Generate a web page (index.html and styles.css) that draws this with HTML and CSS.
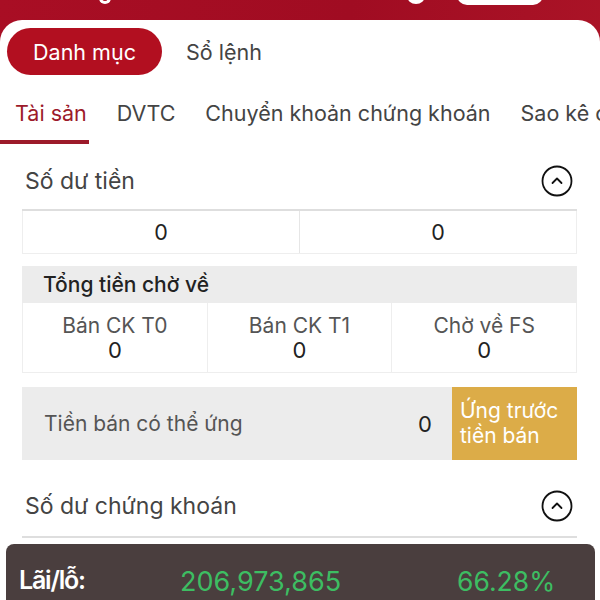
FILE: index.html
```html
<!DOCTYPE html>
<html lang="vi">
<head>
<meta charset="utf-8">
<link rel="stylesheet" href="styles.css">
</head>
<body>
<div class="topbar">
  <span class="top-hook"></span>
  <span class="top-dot"></span>
  <span class="top-btn"></span>
</div>
<main class="card">
  <div class="segments">
    <div class="seg active">Danh mục</div>
    <div class="seg">Sổ lệnh</div>
  </div>
  <nav class="tabs">
    <div class="tab active">Tài sản</div>
    <div class="tab">DVTC</div>
    <div class="tab">Chuyển khoản chứng khoán</div>
    <div class="tab">Sao kê chứng khoán</div>
  </nav>
  <section class="section">
    <div class="sec-head">
      <span class="sec-title">Số dư tiền</span>
      <svg class="toggle" width="32" height="32" viewBox="0 0 32 32"><circle cx="16" cy="16" r="14.5" fill="none" stroke="#111" stroke-width="1.8"/><path d="M11.5 18 L16 13.5 L20.5 18" fill="none" stroke="#111" stroke-width="1.8" stroke-linecap="round" stroke-linejoin="round"/></svg>
    </div>
    <div class="pair">
      <div class="pair-cell">0</div>
      <div class="pair-cell">0</div>
    </div>
    <div class="group">
      <div class="group-head">Tổng tiền chờ về</div>
      <div class="triple">
        <div class="tcell"><div class="tlabel">Bán CK T0</div><div class="tval">0</div></div>
        <div class="tcell"><div class="tlabel">Bán CK T1</div><div class="tval">0</div></div>
        <div class="tcell"><div class="tlabel">Chờ về FS</div><div class="tval">0</div></div>
      </div>
    </div>
    <div class="advance">
      <span class="adv-label">Tiền bán có thể ứng</span>
      <span class="adv-val">0</span>
      <div class="adv-btn">Ứng trước<br>tiền bán</div>
    </div>
  </section>
  <section class="section">
    <div class="sec-head sec-head2">
      <span class="sec-title">Số dư chứng khoán</span>
      <svg class="toggle" width="32" height="32" viewBox="0 0 32 32"><circle cx="16" cy="16" r="14.5" fill="none" stroke="#111" stroke-width="1.8"/><path d="M11.5 18 L16 13.5 L20.5 18" fill="none" stroke="#111" stroke-width="1.8" stroke-linecap="round" stroke-linejoin="round"/></svg>
    </div>
  </section>
  <div class="pl-card">
    <span class="pl-label">Lãi/lỗ:</span>
    <span class="pl-val">206,973,865</span>
    <span class="pl-pct">66.28%</span>
  </div>
</main>
</body>
</html>
```
FILE: styles.css
```css
* { box-sizing: border-box; }
html, body { margin: 0; padding: 0; }
body {
  width: 600px;
  height: 600px;
  overflow: hidden;
  background: linear-gradient(100deg, #a90e24 0%, #a00c22 50%, #ae1628 100%);
  font-family: Inter, Roboto, "Noto Sans", sans-serif;
  color: #444;
}
.topbar {
  height: 20px;
  display: flex;
  align-items: flex-start;
  overflow: hidden;
}
.top-hook {
  margin-left: 99px;
  margin-top: -6px;
  width: 12px;
  height: 10px;
  border: 3px solid #fff;
  border-top: none;
  border-radius: 0 0 7px 7px;
}
.top-dot {
  margin-left: 296px;
  margin-top: -12px;
  width: 18px;
  height: 16px;
  border-radius: 50%;
  background: #fff;
}
.top-btn {
  margin-left: 32px;
  margin-top: -20px;
  width: 86px;
  height: 25px;
  border-radius: 10px;
  background: #fff;
}
.card {
  background: #fff;
  border-radius: 22px 22px 0 0;
  height: 580px;
  overflow: hidden;
}
.segments {
  display: flex;
  align-items: center;
  padding: 8px 7px 0;
  gap: 24px;
}
.seg {
  height: 47px;
  display: flex;
  align-items: center;
  font-size: 21.5px;
  color: #444;
}
.seg.active {
  width: 155px;
  justify-content: center;
  background: #b20f20;
  color: #fff;
  border-radius: 24px;
}
.tabs {
  display: flex;
  white-space: nowrap;
  margin-top: 18px;
  height: 51px;
  gap: 30px;
  padding-left: 15px;
}
.tab {
  font-size: 21.5px;
  color: #444;
  line-height: 28px;
  padding-top: 6px;
}
.tab.active {
  color: #9c1a2a;
  position: relative;
}
.tab.active::after {
  content: "";
  position: absolute;
  left: -15px;
  right: -2px;
  bottom: 0;
  height: 4px;
  background: #9c1a2a;
}
.section {
  padding: 0 23px 0 22px;
}
.sec-head {
  display: flex;
  justify-content: space-between;
  align-items: center;
  height: 67px;
  padding: 8px 4px 0 3px;
  border-bottom: 2px solid #dedede;
}
.sec-head2 {
  margin-top: 15px;
  height: 63px;
  padding-top: 0;
}
.sec-title {
  font-size: 23px;
  color: #444;
}
.toggle { display: block; }
.pair {
  display: flex;
  height: 43px;
  border: 1px solid #eee;
  border-top: none;
}
.pair-cell {
  flex: 1;
  display: flex;
  align-items: center;
  justify-content: center;
  font-size: 21.5px;
  color: #222;
}
.pair-cell + .pair-cell { border-left: 1px solid #e6e6e6; }
.group { margin-top: 12px; }
.group-head {
  background: #ececec;
  height: 37px;
  display: flex;
  align-items: center;
  padding-left: 21px;
  font-size: 21px;
  font-weight: 500;
  color: #222;
}
.triple {
  display: flex;
  height: 70px;
  border: 1px solid #eee;
  border-top: none;
}
.tcell {
  flex: 1;
  display: flex;
  flex-direction: column;
  align-items: center;
  justify-content: center;
  line-height: 25px;
}
.tcell + .tcell { border-left: 1px solid #eee; }
.tlabel { font-size: 21px; color: #555; }
.tval { font-size: 22px; color: #222; }
.advance {
  margin-top: 14px;
  background: #ececec;
  height: 73px;
  display: flex;
  align-items: center;
}
.adv-label {
  flex: 1;
  padding-left: 22px;
  font-size: 21px;
  color: #555;
}
.adv-val {
  font-size: 22px;
  color: #222;
  margin-right: 20px;
}
.adv-btn {
  width: 125px;
  height: 100%;
  background: #dcac48;
  color: #fff;
  font-size: 21px;
  line-height: 25px;
  padding: 11px 0 0 8px;
}
.pl-card {
  margin: 6px 5px 0 6px;
  background: #4a3e3e;
  border-radius: 8px;
  height: 80px;
  display: flex;
  align-items: flex-start;
  padding: 21px 0 0 13px;
  white-space: nowrap;
}
.pl-label { color: #fff; font-weight: 600; width: 161px; font-size: 25px; letter-spacing: -1.2px; }
.pl-val { color: #3dbd62; width: 277px; font-size: 27px; }
.pl-pct { color: #3dbd62; font-size: 26.5px; }
```
